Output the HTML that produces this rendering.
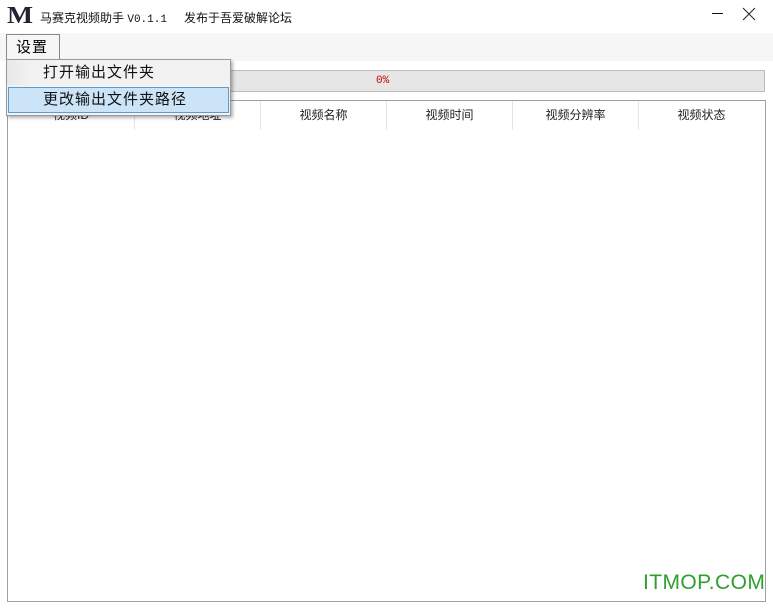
<!DOCTYPE html>
<html><head><style>
body{margin:0;width:773px;height:610px;background:#fff;position:relative;overflow:hidden;font-family:"Liberation Sans","Noto Sans CJK SC",sans-serif;}
.a{position:absolute}
.th{position:absolute;top:101px;height:29px;line-height:28px;text-align:center;font-size:12px;color:#222;border-right:1px solid #e5e5e5}
</style></head><body>
<div class="a" style="left:7px;top:5px;font:900 24px 'Liberation Serif',serif;color:#223;line-height:22px;transform:scaleX(1.15);transform-origin:left">M</div>
<div class="a" style="left:40px;top:9px;font-size:12px;color:#111;white-space:nowrap">马赛克视频助手 <span style="font-family:'Liberation Mono',monospace;font-size:11px">V0.1.1</span></div>
<div class="a" style="left:184px;top:9px;font-size:12px;color:#111">发布于吾爱破解论坛</div>
<div class="a" style="left:712px;top:13px;width:11px;height:1px;background:#111"></div>
<svg class="a" style="left:742px;top:7px" width="14" height="14"><path d="M1 1L13 13M13 1L1 13" stroke="#222" stroke-width="1"/></svg>
<div class="a" style="left:0;top:33px;width:773px;height:28px;background:#f6f6f6"></div>
<div class="a" style="left:6px;top:34px;height:26px;border:1px solid #888;border-bottom:none;background:#f6f6f6;font-size:15px;line-height:26px;padding-left:9px;box-sizing:border-box;width:54px;letter-spacing:1px">设置</div>
<div class="a" style="left:7px;top:70px;width:758px;height:22px;background:#e6e6e6;border:1px solid #bcbcbc;box-sizing:border-box"></div>
<div class="a" style="left:376px;top:75px;font-size:11px;color:#c00;font-family:'Liberation Mono',monospace">0%</div>
<div class="a" style="left:7px;top:100px;width:759px;height:502px;border:1px solid #a0a0a0;box-sizing:border-box"></div>
<div class="th" style="left:8px;width:126px">视频ID</div>
<div class="th" style="left:135px;width:125px">视频地址</div>
<div class="th" style="left:261px;width:125px">视频名称</div>
<div class="th" style="left:387px;width:125px">视频时间</div>
<div class="th" style="left:513px;width:125px">视频分辨率</div>
<div class="th" style="left:639px;width:125px;border-right:none">视频状态</div>
<div class="a" style="left:6px;top:59px;width:225px;height:57px;background:#f2f2f2;border:1px solid #999;box-sizing:border-box;box-shadow:2px 2px 3px rgba(0,0,0,.3)"></div>
<div class="a" style="left:7px;top:60px;width:24px;height:25px;background:linear-gradient(90deg,#e8e8e8,#f2f2f2)"></div>
<div class="a" style="left:43px;top:62px;font-size:15px;line-height:22px;color:#111;letter-spacing:1px">打开输出文件夹</div>
<div class="a" style="left:8px;top:87px;width:221px;height:26px;background:#cce4f7;border:1px solid #5d9bd0;box-sizing:border-box"></div>
<div class="a" style="left:43px;top:88px;font-size:15px;line-height:24px;color:#111;letter-spacing:1px">更改输出文件夹路径</div>
<div class="a" style="left:643px;top:571px;font-size:21px;color:#2ea02e;line-height:24px;letter-spacing:0.4px">ITMOP.COM</div>
</body></html>
